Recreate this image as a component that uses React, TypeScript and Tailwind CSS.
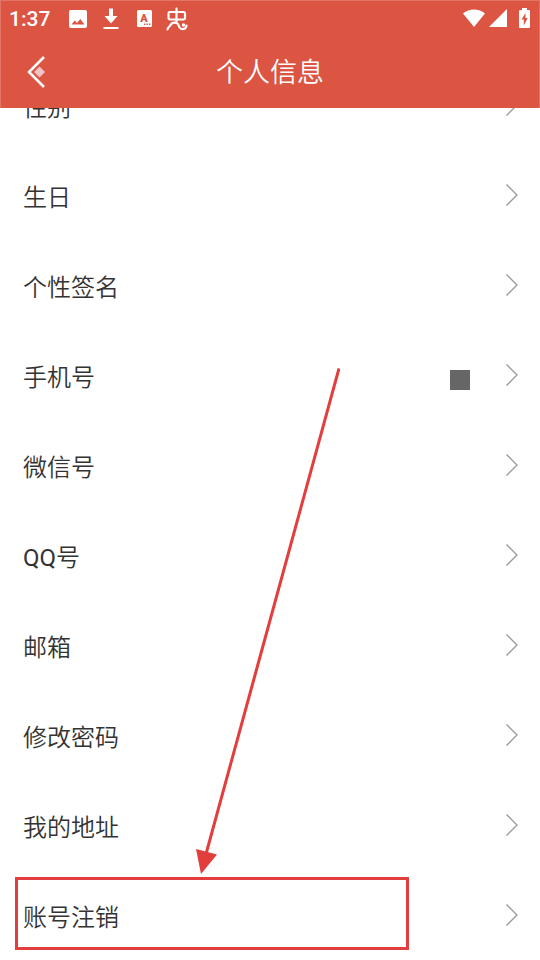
const rows = [
  { label: '性别' },
  { label: '生日' },
  { label: '个性签名' },
  { label: '手机号', masked: true },
  { label: '微信号' },
  { latin: 'QQ', label: '号' },
  { label: '邮箱' },
  { label: '修改密码' },
  { label: '我的地址' },
  { label: '账号注销', marked: true },
];

const StatusBar = () => (
  <div className="flex h-[37px] items-center justify-between pr-[9px] pl-2">
    <div className="flex items-center">
      <span className="w-[60px] text-[21px] leading-9 font-medium">1:37</span>
      {/* Picture */}
      <svg viewBox="0 0 18 18" className="h-[18px] w-[18px]">
        <path
          fill="currentColor"
          fillRule="evenodd"
          d="M2 0h14a2 2 0 0 1 2 2v14a2 2 0 0 1-2 2H2a2 2 0 0 1-2-2V2a2 2 0 0 1 2-2ZM2.500 14.500h13L11.300 9 8 13 5.700 10.400Z"
        />
      </svg>
      {/* Download */}
      <svg viewBox="0 0 16 22" className="ml-4 h-[22px] w-4">
        <path fill="currentColor" d="M6 .500h4v7.500h4.500L8 15.500 1.500 8H6ZM.500 19h15v2H.500Z" />
      </svg>
      {/* Input method */}
      <svg viewBox="0 0 15 17" className="ml-[18px] h-[17px] w-[15px]">
        <rect width="15" height="17" rx="1.500" fill="currentColor" />
        <text x="7" y="12" textAnchor="middle" fontSize="11" fontWeight="900" fill="#dc5442">
          A
        </text>
        <path fill="#dc5442" d="M7 13.500h1.400v1.400H7ZM9.500 13.500h1.400v1.400H9.500ZM12 13.500h1.400v1.400H12Z" />
      </svg>
      {/* App mark */}
      <svg
        viewBox="0 0 22 24"
        className="ml-[14px] h-6 w-[22px]"
        fill="none"
        stroke="currentColor"
        strokeWidth="2.200"
        strokeLinecap="round"
        strokeLinejoin="round"
      >
        <path d="M10.500 1.500V15.500M4 5h13.500a1.500 1.500 0 0 1 1.500 1.500V11a1.500 1.500 0 0 1-1.500 1.500H4A1.500 1.500 0 0 1 2.500 11V6.500A1.500 1.500 0 0 1 4 5Z" />
        <path d="M1.500 22.500c.2-2.200 2.200-2.700 3-4.500 1-2 3.500-2.600 6-2 3.200 1 1.300 4.500 4.500 5.800 3 1 5.500-.8 5.500-3.300" />
        <circle cx="17.500" cy="18" r="1" fill="currentColor" strokeWidth="1.500" />
      </svg>
    </div>

    <div className="flex items-center pb-0.5">
      <svg viewBox="0 0 22 18" className="h-[18px] w-[22px]">
        <path fill="currentColor" d="M0 4.500C6-1 16-1 22 4.500L11 18Z" />
      </svg>
      <svg viewBox="0 0 18 18" className="ml-1 h-[18px] w-[18px]">
        <path fill="currentColor" d="M18 0v18H0Z" />
      </svg>
      <svg viewBox="0 0 11 20" className="ml-3 h-5 w-[11px]">
        <path
          fill="currentColor"
          fillRule="evenodd"
          d="M3 0h5v2h2a1 1 0 0 1 1 1v16a1 1 0 0 1-1 1H1a1 1 0 0 1-1-1V3a1 1 0 0 1 1-1h2ZM6.500 5 2.500 11.500h2.300V17.500L8.700 10H6.500Z"
        />
      </svg>
    </div>
  </div>
);

const Header = () => (
  <header className="relative z-10 h-[108px] border-x border-[#e27465] bg-[#dc5442] text-white shadow-[inset_0_1px_0_#e27465]">
    <StatusBar />
    <div className="grid h-[70px] grid-cols-[72px_1fr_72px] items-center">
      <button type="button" aria-label="返回" className="flex h-full items-center pl-[25px]">
        <svg viewBox="0 0 20 34" className="h-[34px] w-5" fill="none">
          <path d="M18 2 3 17l15 15" stroke="currentColor" strokeWidth="2.500" />
          <path d="m13.500 11.500 5.500 5.500-5.500 5.500L8 17Z" fill="#f2c3c3" />
        </svg>
      </button>
      <h1 className="pt-0.5 text-center text-[27px] leading-9 font-[350]">个人信息</h1>
    </div>
  </header>
);

const Chevron = () => (
  <svg viewBox="0 0 12 22" className="h-[22px] w-3" fill="none">
    <path d="M.500.500 11 11 .500 21.500" stroke="#999" strokeWidth="1.300" />
  </svg>
);

// Pointer from the middle of the list down to the marked row
const Pointer = () => (
  <svg
    viewBox="0 0 144 506"
    className="pointer-events-none absolute top-[368px] left-[196px] z-20 h-[506px] w-36"
  >
    <path d="M143 .500 10 486" stroke="#e33e3e" strokeWidth="3" fill="none" />
    <path d="M0 481 21 486.500 5 506Z" fill="#e33e3e" />
  </svg>
);

export default function App() {
  return (
    <div className="relative min-h-screen overflow-hidden bg-white font-[Roboto,'Noto_Sans_CJK_SC',sans-serif]">
      <Header />
      {/* The list is scrolled, so its first row sits partly under the header */}
      <ul className="-mt-12">
        {rows.map((row) => (
          <li key={row.label} className="relative">
            <button
              type="button"
              className="flex h-[90px] w-full items-center pr-[22px] pl-[23px] text-left text-2xl font-[350] text-[#333]"
            >
              <span className="flex-1 pt-1.5">
                {row.latin && <span className="font-normal">{row.latin}</span>}
                {row.label}
              </span>
              {row.masked && <span className="mt-2.5 mr-9 h-5 w-5 bg-[#666]" />}
              <Chevron />
            </button>
            {row.marked && (
              <span className="pointer-events-none absolute top-[7px] left-[15px] h-[73px] w-[73%] border-3 border-[#e33e3e]" />
            )}
          </li>
        ))}
      </ul>
      <Pointer />
    </div>
  );
}
